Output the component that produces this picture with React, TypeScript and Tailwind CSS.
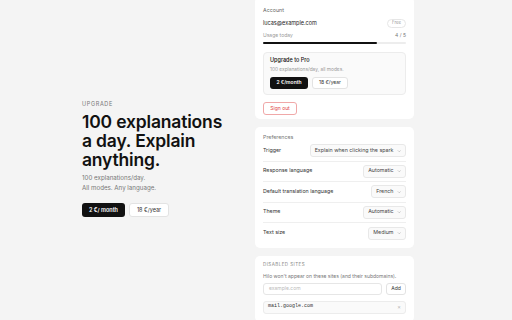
import { ChevronDown } from "lucide-react";

const Select = ({ value }: { value: string }) => (
  <div className="flex h-[13px] items-center gap-[3px] rounded-[3px] border border-[#e8e8e8] bg-[#fafafa] px-[4px] text-[5.3px] text-[#444]">
    <span>{value}</span>
    <ChevronDown size={4.5} strokeWidth={2.2} className="text-[#888]" />
  </div>
);

const PrefRow = ({ label, value, last }: { label: string; value: string; last?: boolean }) => (
  <div className={`flex h-[20.5px] items-center justify-between ${last ? "" : "border-b border-[#efefef]"}`}>
    <span className="text-[5.3px] text-[#333]">{label}</span>
    <Select value={value} />
  </div>
);

const App = () => {
  return (
    <div
      className="flex h-[320px] w-[512px] overflow-hidden bg-[#f4f4f4] pl-[82px]"
      style={{ fontFamily: "Inter, 'Liberation Sans', sans-serif" }}
    >
      {/* Left: upgrade pitch */}
      <div className="flex w-[173px] flex-col justify-center pb-[3px]">
        <div className="text-[5.5px] leading-[8px] tracking-[0.12em] text-[#777]">UPGRADE</div>
        <h1 className="mt-[3.5px] w-[148px] text-[17.5px] font-semibold leading-[19px] tracking-[-0.01em] text-[#111]">
          100 explanations a day. Explain anything.
        </h1>
        <p className="mt-[4.5px] text-[6.2px] leading-[10px] text-[#777]">
          100 explanations/day.
          <br />
          All modes. Any language.
        </p>
        <div className="mt-[10px] flex gap-[4px]">
          <button className="h-[14px] w-[43px] rounded-[3px] bg-[#111] text-[5.5px] font-semibold text-white">
            2 €/ month
          </button>
          <button className="h-[14px] w-[40px] rounded-[3px] border border-[#e3e3e3] bg-white text-[5.5px] text-[#333]">
            18 €/year
          </button>
        </div>
      </div>

      {/* Right: settings cards */}
      <div className="mt-[-3px] flex w-[159px] flex-col gap-[8px]">
        {/* Account */}
        <div className="rounded-[5px] bg-white px-[8px] pb-[4px] pt-[8px]">
          <div className="text-[5.3px] leading-[10px] text-[#666]">Account</div>
          <div className="mt-[3px] flex h-[10px] items-center justify-between">
            <span className="text-[5.5px] text-[#222]">lucas@example.com</span>
            <span className="flex h-[9px] items-center rounded-full border border-[#e6e6e6] px-[4px] text-[4.3px] text-[#999]">
              Free
            </span>
          </div>
          <div className="mt-[4px] flex h-[8px] items-center justify-between text-[5px] text-[#999]">
            <span>Usage today</span>
            <span className="text-[#777]">4 / 5</span>
          </div>
          <div className="mt-[2px] h-[2px] w-full rounded-full bg-[#ededed]">
            <div className="h-full w-[80%] rounded-full bg-[#111]" />
          </div>
          <div className="mt-[8px] rounded-[4px] border border-[#ececec] bg-[#fafafa] px-[6px] pb-[5px] pt-[3px]">
            <div className="text-[5.5px] font-medium leading-[9px] text-[#111]">Upgrade to Pro</div>
            <div className="text-[4.8px] leading-[9px] text-[#999]">100 explanations/day, all modes.</div>
            <div className="mt-[3px] flex gap-[4px]">
              <button className="h-[12px] w-[38px] rounded-[3px] bg-[#111] text-[5px] font-semibold text-white">
                2 €/month
              </button>
              <button className="h-[12px] w-[36px] rounded-[3px] border border-[#e3e3e3] bg-white text-[5px] text-[#333]">
                18 €/year
              </button>
            </div>
          </div>
          <button className="mt-[7px] block h-[13px] w-[34px] rounded-[3px] border border-[#f0a8a8] bg-white text-[5px] text-[#e04545]">
            Sign out
          </button>
        </div>

        {/* Preferences */}
        <div className="rounded-[5px] bg-white px-[8px] pb-[4px] pt-[6px]">
          <div className="text-[5.3px] leading-[8px] text-[#777]">Preferences</div>
          <div>
            <PrefRow label="Trigger" value="Explain when clicking the spark" />
            <PrefRow label="Response language" value="Automatic" />
            <PrefRow label="Default translation language" value="French" />
            <PrefRow label="Theme" value="Automatic" />
            <PrefRow label="Text size" value="Medium" last />
          </div>
        </div>

        {/* Disabled sites */}
        <div className="rounded-[5px] bg-white px-[8px] pb-[8px] pt-[5px]">
          <div className="text-[4.5px] leading-[8px] tracking-[0.1em] text-[#888]">DISABLED SITES</div>
          <div className="mt-[3px] text-[5px] leading-[8px] text-[#777]">
            Hilo won't appear on these sites (and their subdomains).
          </div>
          <div className="mt-[3px] flex gap-[4px]">
            <div className="flex h-[12px] flex-1 items-center rounded-[3px] border border-[#e6e6e6] px-[5px] text-[5px] text-[#bbb]">
              example.com
            </div>
            <button className="h-[12px] w-[20px] rounded-[3px] border border-[#e3e3e3] bg-white text-[5px] text-[#333]">
              Add
            </button>
          </div>
          <div className="mt-[6px] flex h-[13px] items-center justify-between rounded-[3px] border border-[#ececec] bg-[#fafafa] px-[4px]">
            <span className="text-[5px] text-[#333]" style={{ fontFamily: "'Liberation Mono', monospace" }}>
              mail.google.com
            </span>
            <span className="text-[5.5px] text-[#aaa]">×</span>
          </div>
        </div>
      </div>
    </div>
  );
};

export default App;
